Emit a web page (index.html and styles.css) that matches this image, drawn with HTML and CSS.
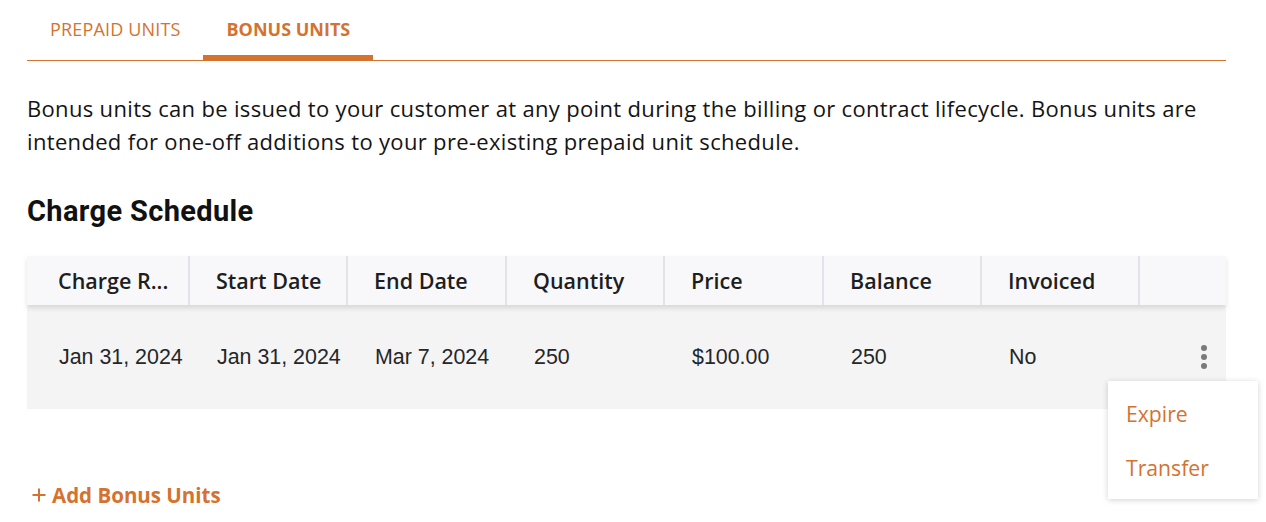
FILE: index.html
```html
<!DOCTYPE html>
<html lang="en">
<head>
<meta charset="utf-8">
<title>Bonus Units</title>
<link rel="stylesheet" href="styles.css">
</head>
<body>
<div class="page">
  <nav class="tabs">
    <a class="tab">PREPAID UNITS</a>
    <a class="tab tab-active">BONUS UNITS</a>
  </nav>

  <p class="intro">Bonus units can be issued to your customer at any point during the billing or contract lifecycle. Bonus units are intended for one-off additions to your pre-existing prepaid unit schedule.</p>

  <h2 class="section-title">Charge Schedule</h2>

  <div class="table">
    <div class="thead">
      <div class="th">Charge R...</div>
      <div class="th">Start Date</div>
      <div class="th">End Date</div>
      <div class="th">Quantity</div>
      <div class="th">Price</div>
      <div class="th">Balance</div>
      <div class="th">Invoiced</div>
      <div class="th"></div>
    </div>
    <div class="tr">
      <div class="td">Jan 31, 2024</div>
      <div class="td">Jan 31, 2024</div>
      <div class="td">Mar 7, 2024</div>
      <div class="td">250</div>
      <div class="td">$100.00</div>
      <div class="td">250</div>
      <div class="td">No</div>
      <div class="td td-actions">
        <span class="kebab"><i></i><i></i><i></i></span>
        <div class="menu">
          <div class="menu-item">Expire</div>
          <div class="menu-item">Transfer</div>
        </div>
      </div>
    </div>
  </div>

  <a class="add-link"><svg class="plus" width="14" height="14" viewBox="0 0 14 14"><path d="M7 0.5V13.5M0.5 7H13.5" stroke="currentColor" stroke-width="2" fill="none"/></svg><span>Add Bonus Units</span></a>
</div>
</body>
</html>
```

FILE: styles.css
```css
* { box-sizing: border-box; }

body {
  margin: 0;
  background: #ffffff;
  font-family: "Open Sans", "Noto Sans", sans-serif;
  color: #1b1b1b;
}

.page {
  width: 1199px;
  margin-left: 27px;
}

.tabs {
  display: flex;
  height: 61px;
  border-bottom: 1px solid #d5722f;
}

.tab {
  position: relative;
  display: flex;
  align-items: center;
  padding: 0 23px 2px;
  font-size: 18px;
  color: #d5722f;
  letter-spacing: 0.16px;
}

.tab-active {
  font-weight: 700;
  letter-spacing: 0;
}

.tab-active::after {
  content: "";
  position: absolute;
  left: 0;
  right: 0;
  bottom: -1px;
  height: 6px;
  background: #d5722f;
}

.intro {
  margin: 31px 0 0;
  font-size: 22px;
  line-height: 33px;
  letter-spacing: 0.33px;
  color: #141414;
}

.section-title {
  margin: 35px 0 0;
  font-family: Roboto, "Noto Sans", sans-serif;
  font-weight: 700;
  font-size: 29px;
  line-height: 36px;
  letter-spacing: 0.35px;
  color: #111;
}

.table {
  margin-top: 27px;
}

.thead,
.tr {
  display: grid;
  grid-template-columns: 161px 158px 159px 158px 159px 158px 158px 88px;
}

.thead {
  position: relative;
  z-index: 1;
  height: 49px;
  background: #f8f8fa;
  box-shadow: 0 3px 5px rgba(0, 0, 0, 0.12);
}

.th {
  display: flex;
  align-items: center;
  padding-left: 26px;
  border-left: 2px solid #e2e2ea;
  font-weight: 600;
  font-size: 21.5px;
  color: #1e1e1e;
  white-space: nowrap;
}

.th:first-child {
  border-left: none;
  padding-left: 31px;
}

.tr {
  height: 104px;
  background: #f4f4f4;
}

.td {
  display: flex;
  align-items: center;
  padding-left: 29px;
  font-family: "Liberation Sans", Arial, sans-serif;
  font-size: 21.4px;
  color: #262626;
  white-space: nowrap;
}

.td:first-child {
  padding-left: 32px;
}

.td-actions {
  position: relative;
  justify-content: flex-end;
  padding-right: 19px;
}

.kebab {
  display: flex;
  flex-direction: column;
  gap: 3px;
}

.kebab i {
  display: block;
  width: 6px;
  height: 6px;
  border-radius: 50%;
  background: #7a7a7a;
}

.menu {
  position: absolute;
  top: 76px;
  left: -30px;
  width: 150px;
  padding: 5px 0;
  background: #fff;
  box-shadow: 0 1px 6px rgba(0, 0, 0, 0.18);
  z-index: 2;
}

.menu-item {
  height: 54px;
  display: flex;
  align-items: center;
  padding-left: 18px;
  font-family: "Open Sans", "Noto Sans", sans-serif;
  font-size: 21.2px;
  color: #d5722f;
}

.add-link {
  display: inline-flex;
  align-items: center;
  gap: 6px;
  margin-top: 72px;
  margin-left: 5px;
  font-weight: 700;
  font-size: 20.5px;
  color: #d5722f;
}

.plus {
  display: block;
}
```
